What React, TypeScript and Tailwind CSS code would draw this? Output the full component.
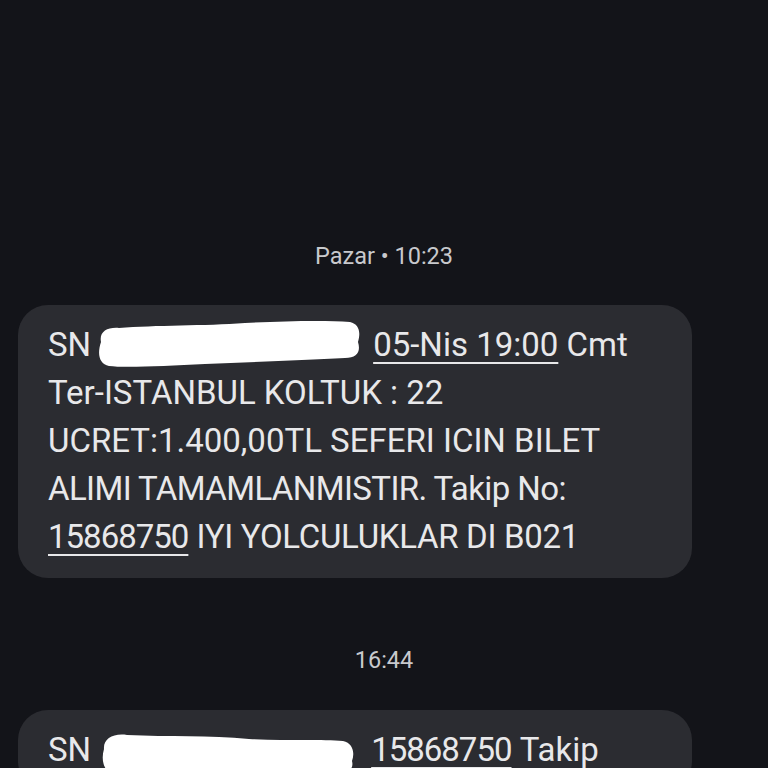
import React from "react";

function Blob({ w, h, variant }: { w: number; h: number; variant: number }) {
  const d =
    variant === 1
      ? "M6 24 C4 14 12 9 24 10 C60 7 110 8 150 5 C190 3 230 2 255 4 C264 6 266 14 263 24 C266 34 262 40 250 40 C210 42 160 44 110 46 C70 48 30 50 14 48 C4 46 2 36 6 24 Z"
      : "M5 20 C4 10 14 4 28 6 C70 8 110 6 150 10 C190 12 225 10 244 12 C254 14 256 24 253 32 C255 40 250 44 238 44 C200 44 150 46 100 46 C60 46 28 47 14 45 C4 42 2 30 5 20 Z";
  return (
    <svg width={w} height={h} viewBox={`0 0 ${w} ${h}`} className="block">
      <path d={d} fill="#ffffff" />
    </svg>
  );
}

export default function App() {
  const font = { fontFamily: "Roboto, 'Noto Sans', sans-serif" };
  return (
    <div className="w-[768px] h-[768px] overflow-hidden bg-[#131419] flex flex-col items-start" style={font}>
      <div className="w-full text-center text-[23.5px] leading-[28px] text-[#c8c9cd] mt-[242px]">
        Pazar • 10:23
      </div>
      <div className="ml-[18px] mt-[35px] w-[674px] rounded-[30px] bg-[#2b2c31] pl-[30px] pr-[10px] pt-[16px] pb-[17px] text-[33px] leading-[48px] text-[#e8e8ea]">
        <div className="whitespace-nowrap flex items-center h-[48px]">
          <span>SN</span>
          <span className="ml-[4px] mr-[10px] -mt-[4px] flex"><Blob w={268} h={50} variant={1} /></span>
          <span className="underline decoration-2 underline-offset-[6px]">05-Nis 19:00</span>
          <span>&nbsp;Cmt</span>
        </div>
        <div className="whitespace-nowrap">Ter-ISTANBUL KOLTUK : 22</div>
        <div className="whitespace-nowrap">UCRET:1.400,00TL SEFERI ICIN BILET</div>
        <div className="whitespace-nowrap tracking-[-0.6px]">ALIMI TAMAMLANMISTIR. Takip No:</div>
        <div className="whitespace-nowrap">
          <span className="underline decoration-2 underline-offset-[6px] tracking-[-1px]">15868750</span>{" "}
          <span className="tracking-[-0.3px]">IYI YOLCULUKLAR DI B021</span>
        </div>
      </div>
      <div className="w-full text-center text-[23.5px] leading-[28px] text-[#c8c9cd] mt-[68px]">16:44</div>
      <div className="ml-[18px] mt-[36px] w-[674px] rounded-[30px] bg-[#2b2c31] pl-[30px] pr-[10px] pt-[16px] pb-[17px] text-[33px] leading-[48px] text-[#e8e8ea]">
        <div className="whitespace-nowrap flex items-center h-[48px]">
          <span>SN</span>
          <span className="ml-[8px] mr-[14px] mt-[6px] flex"><Blob w={258} h={48} variant={2} /></span>
          <span className="underline decoration-2 underline-offset-[6px] tracking-[-1px]">15868750</span>
          <span>&nbsp;Takip</span>
        </div>
      </div>
    </div>
  );
}
